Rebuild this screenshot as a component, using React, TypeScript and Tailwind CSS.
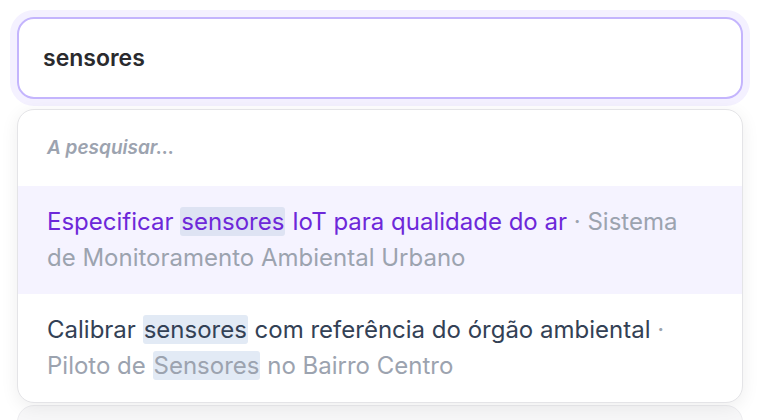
import React from 'react';

const font = { fontFamily: 'Inter, "Noto Sans", sans-serif' };

function Mark({ children, onTint }: { children: React.ReactNode; onTint?: boolean }) {
  return (
    <mark
      className={
        'rounded-[3px] px-[1px] text-inherit ' + (onTint ? 'bg-[#dee3f3]' : 'bg-[#e2eaf5]')
      }
    >
      {children}
    </mark>
  );
}

export default function App() {
  const [query, setQuery] = React.useState('sensores');

  return (
    <div className="h-[420px] w-[760px] overflow-hidden bg-white" style={font}>
      <div className="flex flex-col px-[17px] pt-[17px]">
        <div className="rounded-[17px] ring-[7px] ring-[#f4f1ff]">
          <input
            value={query}
            onChange={(e) => setQuery(e.target.value)}
            className="h-[82px] w-full rounded-[17px] border-2 border-[#c4b5fd] bg-white px-[24px] text-[23px] font-semibold text-[#2a2a2e] outline-none"
          />
        </div>

        <div className="relative z-10 mt-[10px] overflow-hidden rounded-[17px] border border-[#e4e4e7] bg-white shadow-[0_4px_18px_rgba(0,0,0,0.07)]">
          <div className="flex h-[76px] items-center px-[29px] text-[19px] font-semibold italic text-[#9ca3af]">
            A pesquisar...
          </div>

          <div className="bg-[#f5f3ff] py-[18px] pl-[29px] pr-[48px] text-[24px] leading-[36px]">
            <span className="text-[#6d28d9]">
              Especificar <Mark onTint>sensores</Mark> IoT para qualidade do ar
            </span>
            <span className="text-[#9ca3af]"> · Sistema de Monitoramento Ambiental Urbano</span>
          </div>

          <div className="py-[18px] pl-[29px] pr-[48px] text-[24px] leading-[36px]">
            <span className="text-[#334155]">
              Calibrar <Mark>sensores</Mark> com referência do órgão ambiental
            </span>
            <span className="text-[#9ca3af]">
              {' '}· Piloto de <Mark>Sensores</Mark> no Bairro Centro
            </span>
          </div>
        </div>

        <div className="mt-[2px] h-[40px] rounded-t-[17px] border border-[#ececef] bg-[#f7f7f8]" />
      </div>
    </div>
  );
}
